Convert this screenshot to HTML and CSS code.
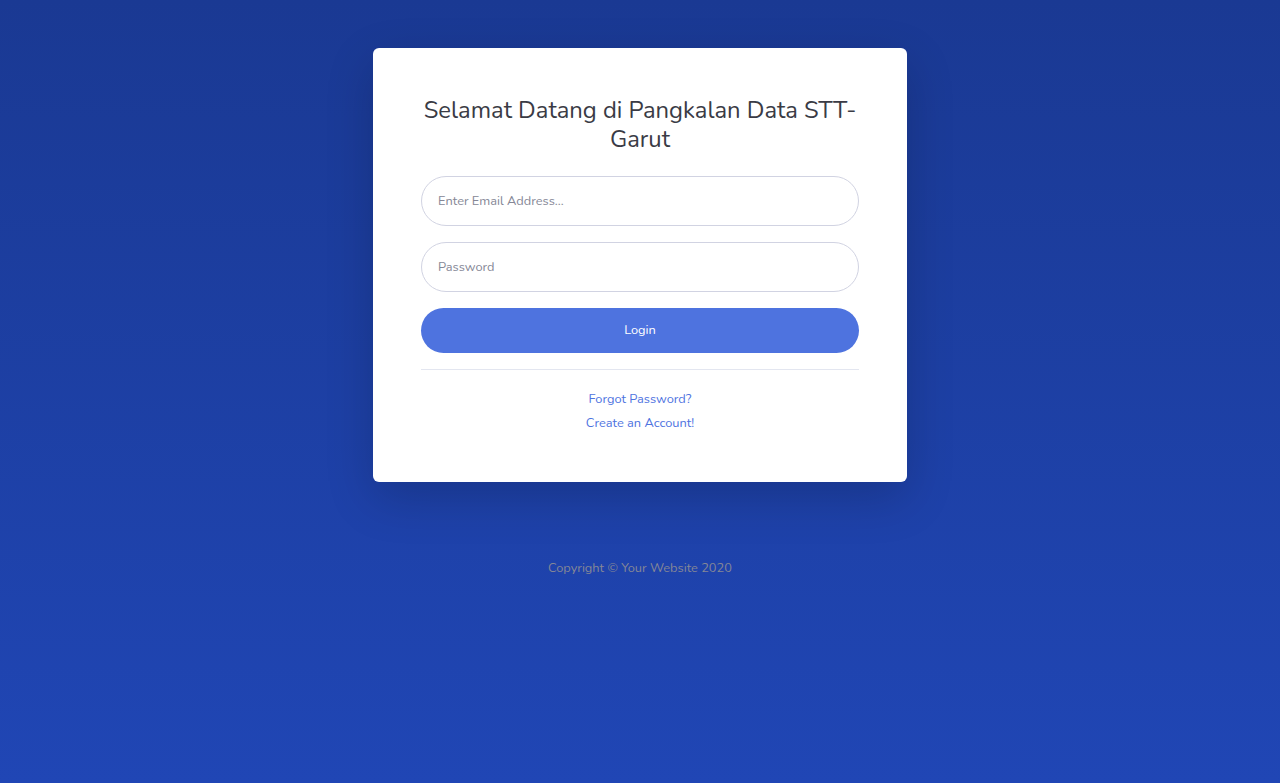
FILE: index.html
```html
<!DOCTYPE html>
<html lang="id">
<head>
<meta charset="utf-8">
<title>Login</title>
<link rel="stylesheet" href="styles.css">
</head>
<body>
<main class="page">
  <section class="card">
    <h1 class="title">Selamat Datang di Pangkalan Data STT-Garut</h1>
    <form class="form">
      <input class="field" type="email" placeholder="Enter Email Address...">
      <input class="field" type="password" placeholder="Password">
      <button class="btn" type="button">Login</button>
    </form>
    <hr class="rule">
    <div class="links">
      <a class="link" href="#">Forgot Password?</a>
      <a class="link" href="#">Create an Account!</a>
    </div>
  </section>
  <footer class="footer">Copyright © Your Website 2020</footer>
</main>
</body>
</html>
```

FILE: styles.css
```css
* { box-sizing: border-box; }
html, body { height: 100%; }
body {
  margin: 0;
  min-height: 783px;
  background: linear-gradient(180deg, #1a3993 0%, #2046b5 100%);
  font-family: "Nunito", Lato, "Noto Sans", sans-serif;
  color: #858796;
  font-size: 16px;
}
.page {
  display: flex;
  flex-direction: column;
  align-items: center;
  padding-top: 48px;
}
.card {
  width: 534px;
  background: #fff;
  border-radius: 6px;
  padding: 48px;
  box-shadow: 0 16px 48px rgba(0,0,0,0.175);
}
.title {
  margin: 0 0 22px;
  font-size: 23.8px;
  font-weight: 400;
  line-height: 28.8px;
  color: #3a3b45;
  text-align: center;
}
.form {
  display: flex;
  flex-direction: column;
  gap: 16px;
}
.field {
  height: 50px;
  border: 1px solid #d1d3e2;
  border-radius: 160px;
  padding: 0 16px;
  font-family: inherit;
  font-size: 12.8px;
  color: #6e707e;
  outline: none;
}
.field::placeholder { color: #858796; }
.btn {
  height: 45px;
  border: none;
  border-radius: 160px;
  background: #4e73df;
  color: #fff;
  font-family: inherit;
  font-size: 12.8px;
}
.rule {
  margin: 16px 0 20px;
  border: 0;
  border-top: 1px solid #e3e6f0;
}
.links {
  display: flex;
  flex-direction: column;
  align-items: center;
  gap: 5px;
  padding-bottom: 1px;
}
.link {
  font-size: 12.8px;
  line-height: 19px;
  color: #4e73df;
  text-decoration: none;
}
.footer {
  margin-top: 77px;
  font-size: 12.8px;
  color: #858796;
}
```
